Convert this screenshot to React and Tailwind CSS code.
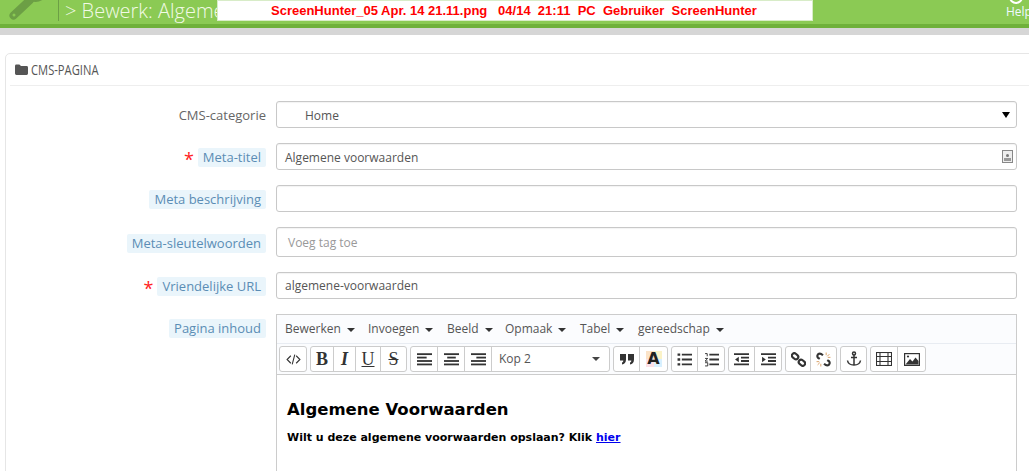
const Caret = () => <span className="ml-[6px] inline-block h-0 w-0 border-x-[4px] border-t-[4px] border-x-transparent border-t-[#333] align-middle" />;

const Icon = ({ children, w = 15, h = 15 }) => (
  <svg width={w} height={h} viewBox="0 0 14 14" fill="none" stroke="#333" strokeWidth="1.700">{children}</svg>
);

const bars = (rows) => rows.map(([a, b], i) => <path key={i} d={`M${a} ${2 + i * 3.2}H${b}`} />);

const Btn = ({ w, children, last }) => (
  <div className={`flex h-full items-center justify-center ${w} ${last ? "" : "border-r border-[#ccc]"}`}>{children}</div>
);

const Group = ({ children, className = "" }) => (
  <div className={`flex h-[26px] rounded-[3px] border border-[#ccc] bg-white ${className}`}>{children}</div>
);

const Serif = ({ className = "", children }) => (
  <span className={`text-[18px] leading-none text-[#333] [font-family:'Liberation_Serif',serif] ${className}`}>{children}</span>
);

const Label = ({ text, req }) => (
  <div className="flex w-[256px] shrink-0 items-center justify-end pt-[2px]">
    {req && <span className="mr-[4px] translate-y-[1px] text-[18px] leading-none text-[#f22]">*</span>}
    <span className="rounded-[2px] bg-[#eaf5fb] px-[5px] py-[1px] text-[13px] leading-[17px] text-[#5b8db5]">{text}</span>
  </div>
);

const Field = ({ children, h = "h-[27px]", className = "" }) => (
  <div className={`ml-[10px] flex w-[741px] items-center rounded-[3px] border border-[#c8c8c8] bg-white text-[12px] text-[#555] shadow-[inset_0_1px_1px_rgba(0,0,0,0.05)] ${h} ${className}`}>
    {children}
  </div>
);

export default function App() {
  return (
    <div className="h-[471px] w-[1029px] overflow-hidden bg-white [font-family:'Open_Sans',sans-serif]">
      <div className="relative">
        <header className="flex h-[28px] items-start overflow-hidden border-b-[4px] border-[#6fb13a] bg-[#8bca54]">
          <svg width="48" height="24" viewBox="0 0 48 24" className="ml-[8px] shrink-0">
            <path d="M5.500 15.500 L22 0" stroke="#6c9f45" strokeWidth="8" strokeLinecap="round" />
            <path d="M20 -3 L38 -8 L37 -2 Q30 4 23 1 Z" fill="#6c9f45" />
            <circle cx="6" cy="15" r="1.500" fill="#8bca54" />
          </svg>
          <div className="ml-[2px] h-[21px] w-px bg-[#6c9f45]" />
          <span className="ml-[6px] whitespace-nowrap text-[20px] font-light leading-[22px] text-[#f2fae6]">&gt; Bewerk: Algemene voorwaarden</span>
          <div className="ml-auto flex w-[22px] shrink-0 flex-col items-start">
            <div className="-mt-[10px] ml-[2px] h-[14px] w-[14px] rounded-full border-[2px] border-white" />
            <span className="-ml-[1px] mt-[1px] text-[12px] leading-[14px] text-[#eef9ff]">Help</span>
          </div>
        </header>

        <div className="absolute left-[217px] top-0 flex h-[21px] w-[596px] items-center border border-[#d8ecc8] bg-white pl-[53px] text-[13px] font-bold whitespace-pre text-[#f00] [font-family:'Liberation_Sans',sans-serif]">
          ScreenHunter_05 Apr. 14 21.11.png   04/14  21:11  PC  Gebruiker  ScreenHunter
        </div>
      </div>

      <div className="h-[7px] bg-[#d6d6d6]" />

      <main className="ml-[5px] mt-[18px] h-[500px] w-[1040px] rounded-tl-[5px] border border-[#e6e6e6] px-[4px]">
        <div className="flex h-[32px] items-center border-b border-[#eee] pl-[5px]">
          <svg width="13" height="11" viewBox="0 0 13 11" fill="#555"><path d="M0 2a1.400 1.400 0 0 1 1.400-1.400h3L6 2h5.600A1.400 1.400 0 0 1 13 3.400v6.200A1.400 1.400 0 0 1 11.600 11H1.400A1.400 1.400 0 0 1 0 9.600Z" /></svg>
          <span className="ml-[3px] inline-block origin-left scale-x-[0.8] whitespace-nowrap text-[14px] leading-none text-[#555]">CMS-PAGINA</span>
        </div>

        <form className="mt-[15px] flex flex-col">
          <div className="flex">
            <div className="flex w-[256px] shrink-0 items-center justify-end pt-[2px] text-[13px] text-[#666]">CMS-categorie</div>
            <Field>
              <span className="ml-[28px] flex-1 pt-[2px] text-[#555]">Home</span>
              <span className="mr-[6px] h-0 w-0 border-x-[4px] border-t-[6px] border-x-transparent border-t-black" />
            </Field>
          </div>

          <div className="mt-[15px] flex">
            <Label text="Meta-titel" req />
            <Field>
              <span className="ml-[8px] flex-1 pt-[2px]">Algemene voorwaarden</span>
              <span className="mr-[3px] flex h-[13px] w-[11px] flex-col items-center justify-end border border-[#888] bg-[#eee] pb-[1px]">
                <span className="h-[3px] w-[3px] rounded-full bg-[#777]" />
                <span className="mt-px h-[3px] w-[7px] bg-[#999]" />
              </span>
            </Field>
          </div>

          <div className="mt-[15px] flex">
            <Label text="Meta beschrijving" />
            <Field />
          </div>

          <div className="mt-[15px] flex">
            <Label text="Meta-sleutelwoorden" />
            <Field h="h-[30px]">
              <span className="ml-[11px] pt-[2px] text-[#999]">Voeg tag toe</span>
            </Field>
          </div>

          <div className="mt-[15px] flex">
            <Label text="Vriendelijke URL" req />
            <Field>
              <span className="ml-[8px]">algemene-voorwaarden</span>
            </Field>
          </div>

          <div className="mt-[15px] flex items-start">
            <div className="flex h-[27px] w-[256px] shrink-0 items-center justify-end pt-[2px]">
              <span className="rounded-[2px] bg-[#eaf5fb] px-[5px] py-[1px] text-[13px] leading-[17px] text-[#5b8db5]">Pagina inhoud</span>
            </div>
            <div className="ml-[10px] h-[200px] w-[741px] border border-b-0 border-[#ccc]">
              <div className="flex h-[29px] items-center border-b border-[#e8ecf2] bg-[#fbfcfe] text-[12px] text-[#555]">
                <span className="ml-[8px] w-[83px]">Bewerken<Caret /></span>
                <span className="w-[79px]">Invoegen<Caret /></span>
                <span className="w-[58px]">Beeld<Caret /></span>
                <span className="w-[75px]">Opmaak<Caret /></span>
                <span className="w-[58px]">Tabel<Caret /></span>
                <span>gereedschap<Caret /></span>
              </div>
              <div className="flex h-[31px] items-center gap-[3px] border-b border-[#ccc] bg-[#fbfcfe] pl-[2px]">
                <Group>
                  <Btn w="w-[26px]" last>
                    <Icon><path d="M4.500 3.500 1 7l3.500 3.500M9.500 3.500 13 7l-3.500 3.500M8.200 2.500 5.800 11.500" strokeWidth="1" /></Icon>
                  </Btn>
                </Group>
                <Group>
                  <Btn w="w-[23px]"><Serif className="font-bold">B</Serif></Btn>
                  <Btn w="w-[22px]"><Serif className="font-bold italic">I</Serif></Btn>
                  <Btn w="w-[25px]"><Serif className="underline">U</Serif></Btn>
                  <Btn w="w-[25px]" last><Serif className="line-through">S</Serif></Btn>
                </Group>
                <Group>
                  <Btn w="w-[27px]"><Icon>{bars([[0, 14], [0, 9], [0, 14], [0, 14]])}</Icon></Btn>
                  <Btn w="w-[27px]"><Icon>{bars([[0, 14], [3, 11], [0, 14], [0, 14]])}</Icon></Btn>
                  <Btn w="w-[27px]"><Icon>{bars([[0, 14], [5, 14], [0, 14], [0, 14]])}</Icon></Btn>
                  <Btn w="w-[117px]" last>
                    <span className="ml-[7px] flex-1 text-[12px] text-[#555]">Kop 2</span>
                    <span className="mr-[9px] h-0 w-0 border-x-[4px] border-t-[4px] border-x-transparent border-t-[#444]" />
                  </Btn>
                </Group>
                <Group>
                  <Btn w="w-[26px]">
                    <svg width="14" height="12" viewBox="0 0 14 12" fill="#333"><path d="M0 1h6v5.500C6 9.500 4.500 11 2 11.500V9.500C3 9.200 3.300 8.400 3.300 7.500H0ZM8 1h6v5.500c0 3-1.500 4.500-4 5V9.500c1-.3 1.300-1.100 1.300-2H8Z" /></svg>
                  </Btn>
                  <Btn w="w-[27px]" last>
                    <div className="grid h-[16px] w-[16px] place-items-center bg-[conic-gradient(#fbf3c8_0_25%,#d8f0ff_0_50%,#fde0e6_0_75%,#fbe3c8_0)] text-[16px] font-bold leading-none text-[#222] [font-family:'DejaVu_Sans',sans-serif]">A</div>
                  </Btn>
                </Group>
                <Group>
                  <Btn w="w-[26px]">
                    <Icon>
                      <path d="M4.500 2.500H14M4.500 7H14M4.500 11.500H14" />
                      <path d="M0.500 2.500h2.500M0.500 7h2.500M0.500 11.500h2.500" strokeWidth="2.200" />
                    </Icon>
                  </Btn>
                  <Btn w="w-[26px]" last>
                    <Icon>
                      <path d="M5 2.500H14M5 7H14M5 11.500H14" />
                      <path d="M1 1.500h2V4M1 6h2.500L1 8.500h2.500M1 10h2.500v3H1" strokeWidth="0.900" />
                    </Icon>
                  </Btn>
                </Group>
                <Group>
                  <Btn w="w-[26px]">
                    <Icon>
                      <path d="M0 2h14M6.500 5.200H14M6.500 8.400H14M0 11.600h14" />
                      <path d="M4.500 4.500v5L1 7Z" fill="#333" stroke="none" />
                    </Icon>
                  </Btn>
                  <Btn w="w-[26px]" last>
                    <Icon>
                      <path d="M0 2h14M6.500 5.200H14M6.500 8.400H14M0 11.600h14" />
                      <path d="M1 4.500v5L4.500 7Z" fill="#333" stroke="none" />
                    </Icon>
                  </Btn>
                </Group>
                <Group>
                  <Btn w="w-[25px]">
                    <Icon>
                      <rect x="0.600" y="1.800" width="6.400" height="4.400" rx="2.200" transform="rotate(40 3.800 4)" strokeWidth="2" />
                      <rect x="7" y="7.800" width="6.400" height="4.400" rx="2.200" transform="rotate(40 10.200 10)" strokeWidth="2" />
                    </Icon>
                  </Btn>
                  <Btn w="w-[25px]" last>
                    <Icon>
                      <path d="M3.500 6.500 2 5.500C.5 4 1.500 1.500 3.500 1.500c1.200 0 2 .6 3 1.500M10.500 7.500 12 8.500c1.500 1.500.5 4-1.500 4-1.200 0-2-.6-3-1.500" strokeWidth="2" />
                      <path d="M9.500 .5v2.500M12.500 2 10.500 4M13.500 5h-2.500M.5 9H3M1.500 12l2-2M4.500 13.500V11" stroke="#d9a066" strokeWidth="0.900" />
                    </Icon>
                  </Btn>
                </Group>
                <Group>
                  <Btn w="w-[25px]" last>
                    <svg width="16" height="16" viewBox="0 0 16 16" fill="none" stroke="#333" strokeWidth="1.500">
                      <circle cx="8" cy="2.500" r="1.500" />
                      <path d="M8 4v10M5 6.500h6M1.500 9.500c.5 3 3 4.500 6.500 4.500s6-1.500 6.500-4.500" />
                    </svg>
                  </Btn>
                </Group>
                <Group>
                  <Btn w="w-[27px]">
                    <svg width="16" height="14" viewBox="0 0 16 14" fill="none" stroke="#333" strokeWidth="1.100">
                      <rect x="0.500" y="0.500" width="15" height="13" />
                      <path d="M4 .5v13M12 .5v13M.5 4.500H15.500M.5 9.500H15.500" />
                    </svg>
                  </Btn>
                  <Btn w="w-[27px]" last>
                    <svg width="16" height="13" viewBox="0 0 16 13" fill="none" stroke="#333" strokeWidth="1.200">
                      <rect x="0.600" y="0.600" width="14.800" height="11.800" />
                      <path d="M1.500 11.500 6 6l2.500 2.500 3-4 3 3.500v3.500Z" fill="#333" stroke="none" />
                      <circle cx="4" cy="3.500" r="1.100" fill="#333" stroke="none" />
                    </svg>
                  </Btn>
                </Group>
              </div>
              <div className="bg-white pl-[10px] pt-[25px] text-black [font-family:'DejaVu_Sans',sans-serif]">
                <h2 className="text-[16.500px] font-bold leading-[20px]">Algemene Voorwaarden</h2>
                <p className="mt-[11px] text-[11px] font-bold leading-[14px]">
                  Wilt u deze algemene voorwaarden opslaan? Klik <a className="text-[#00e] underline">hier</a>
                </p>
              </div>
            </div>
          </div>
        </form>
      </main>
    </div>
  );
}
